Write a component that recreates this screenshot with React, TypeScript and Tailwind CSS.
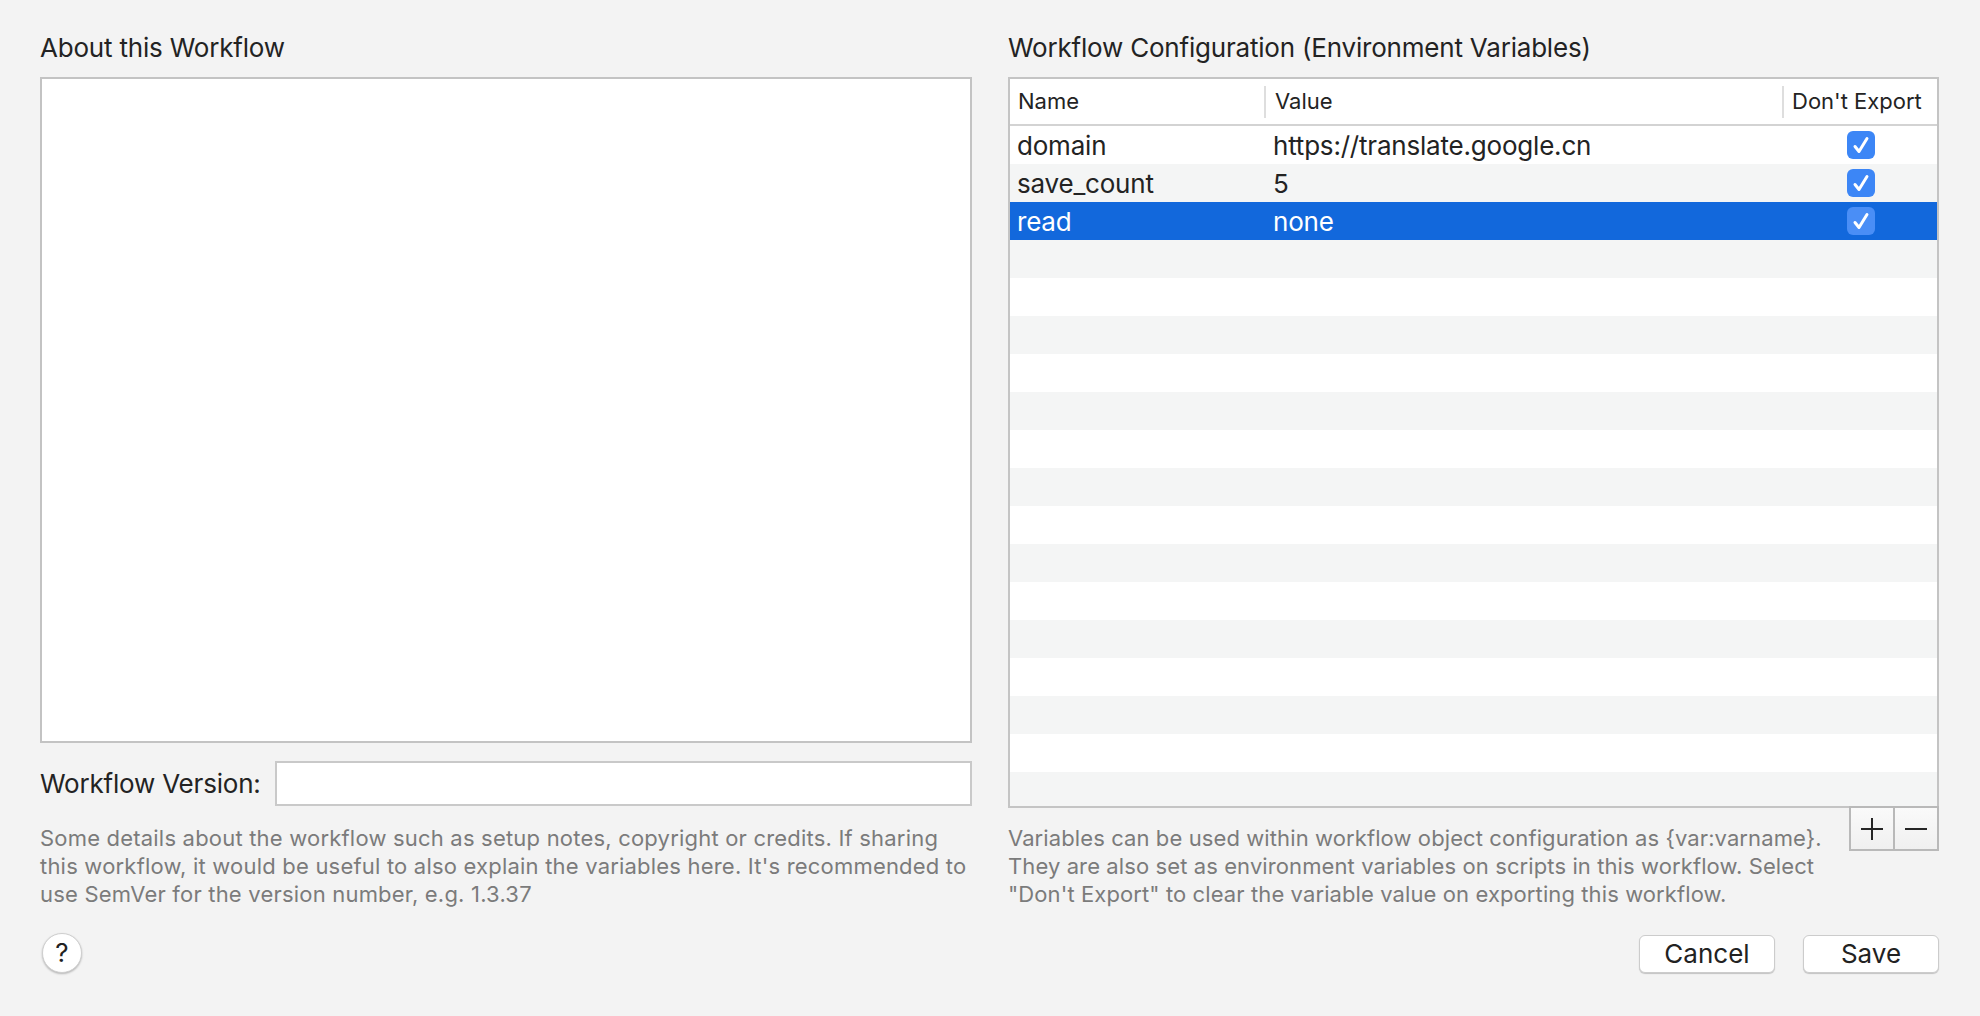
import React from "react";

const rows = [
  { name: "domain", value: "https://translate.google.cn", checked: true },
  { name: "save_count", value: "5", checked: true },
  { name: "read", value: "none", checked: true, selected: true },
];

const configHelp =
  'Variables can be used within workflow object configuration as {var:varname}. They are also set as environment variables on scripts in this workflow. Select "Don\'t Export" to clear the variable value on exporting this workflow.';

const Check: React.FC<{ selected?: boolean }> = ({ selected }) => (
  <svg width="28" height="28" viewBox="0 0 28 28">
    <rect x="0" y="0" width="28" height="28" rx="6" fill={selected ? "#4a8ef6" : "#3c86f6"} />
    <path
      d="M8 15.5 L12 20.5 L20 7.5"
      fill="none"
      stroke="#ffffff"
      strokeWidth="3"
      strokeLinecap="round"
      strokeLinejoin="round"
    />
  </svg>
);

export default function App() {
  // 18 rows fill the visible table body, the last one is cut off
  const body = Array.from({ length: 18 }, (_, i) => rows[i]);

  return (
    <div className="w-[1980px] h-[1016px] bg-[#f3f3f3] font-['Inter',sans-serif] text-[#232323] flex gap-[36px] pl-[40px] overflow-hidden">
      {/* left column */}
      <div className="w-[932px] flex flex-col pt-[32px]">
        <div className="text-[26px] leading-[32px] tracking-[-0.2px]">About this Workflow</div>
        <div className="mt-[13px] h-[666px] bg-white border-2 border-[#c3c3c3]" />

        <div className="mt-[18px] flex items-center h-[45px]">
          <div className="text-[26px] tracking-[-0.2px] w-[235px]">Workflow Version:</div>
          <div className="flex-1 h-[45px] bg-white border-2 border-[#c9c9c9]" />
        </div>

        <p className="mt-[18px] text-[22px] leading-[28px] tracking-[0.2px] text-[#7b7b7b]">
          Some details about the workflow such as setup notes, copyright or credits. If sharing this workflow,
          it would be useful to also explain the variables here. It's recommended to use SemVer for the version
          number, e.g. 1.3.37
        </p>

        <button className="mt-[25px] ml-[2px] w-[40px] h-[40px] rounded-full bg-white border border-[#cfcfcf] shadow-[0_1px_2px_rgba(0,0,0,0.25)] flex items-center justify-center text-[26px] leading-none text-[#222]">
          ?
        </button>
      </div>

      {/* right column */}
      <div className="w-[931px] flex flex-col pt-[32px]">
        <div className="text-[26px] leading-[32px] tracking-[-0.2px]">Workflow Configuration (Environment Variables)</div>

        <div className="mt-[13px] h-[729px] border-2 border-b-0 border-[#c4c4c4] bg-white flex flex-col overflow-hidden">
          {/* header */}
          <div className="h-[45px] shrink-0 flex items-center border-b-2 border-[#d3d3d3] text-[22px] box-content">
            <div className="w-[254px] pl-[8px]">Name</div>
            <div className="w-[2px] h-[32px] bg-[#dedede]" />
            <div className="w-[516px] pl-[9px]">Value</div>
            <div className="w-[2px] h-[32px] bg-[#dedede]" />
            <div className="flex-1 pl-[8px]">Don't Export</div>
          </div>

          {/* body */}
          <div className="flex-1 overflow-hidden">
            {body.map((r, i) => (
              <div
                key={i}
                className={`h-[38px] flex items-center text-[26px] tracking-[-0.2px] ${
                  r?.selected ? "bg-[#1268dc] text-white" : i % 2 === 0 ? "bg-white" : "bg-[#f4f5f5]"
                }`}
              >
                {r && (
                  <>
                    <div className="w-[256px] pl-[7px]">{r.name}</div>
                    <div className="w-[518px] pl-[7px]">{r.value}</div>
                    <div className="flex-1 flex justify-center">
                      <Check selected={r.selected} />
                    </div>
                  </>
                )}
              </div>
            ))}
          </div>
        </div>

        <div className="flex items-start justify-between border-t-2 border-[#c4c4c4]">
          <p className="pt-[16px] w-[820px] text-[22px] leading-[28px] tracking-[0.1px] text-[#7b7b7b]">
            {configHelp}
          </p>
          <div className="flex h-[45px] -mt-[2px] border-2 border-[#b9b9b9] bg-gradient-to-b from-[#fafafa] to-[#f0f0f0]">
            <div className="w-[42px] flex items-center justify-center">
              <svg width="24" height="24" viewBox="0 0 24 24">
                <path d="M12 1 V23 M1 12 H23" stroke="#262626" strokeWidth="2" />
              </svg>
            </div>
            <div className="w-[2px] bg-[#b9b9b9]" />
            <div className="w-[42px] flex items-center justify-center">
              <svg width="24" height="24" viewBox="0 0 24 24">
                <path d="M1 12 H23" stroke="#262626" strokeWidth="2" />
              </svg>
            </div>
          </div>
        </div>

        <div className="mt-[27px] flex justify-end gap-[28px]">
          <button className="w-[136px] h-[38px] rounded-[6px] bg-white border border-[#cccccc] shadow-[0_1px_1px_rgba(0,0,0,0.2)] text-[26px] leading-none text-[#222]">
            Cancel
          </button>
          <button className="w-[136px] h-[38px] rounded-[6px] bg-white border border-[#cccccc] shadow-[0_1px_1px_rgba(0,0,0,0.2)] text-[26px] leading-none text-[#222]">
            Save
          </button>
        </div>
      </div>
    </div>
  );
}
